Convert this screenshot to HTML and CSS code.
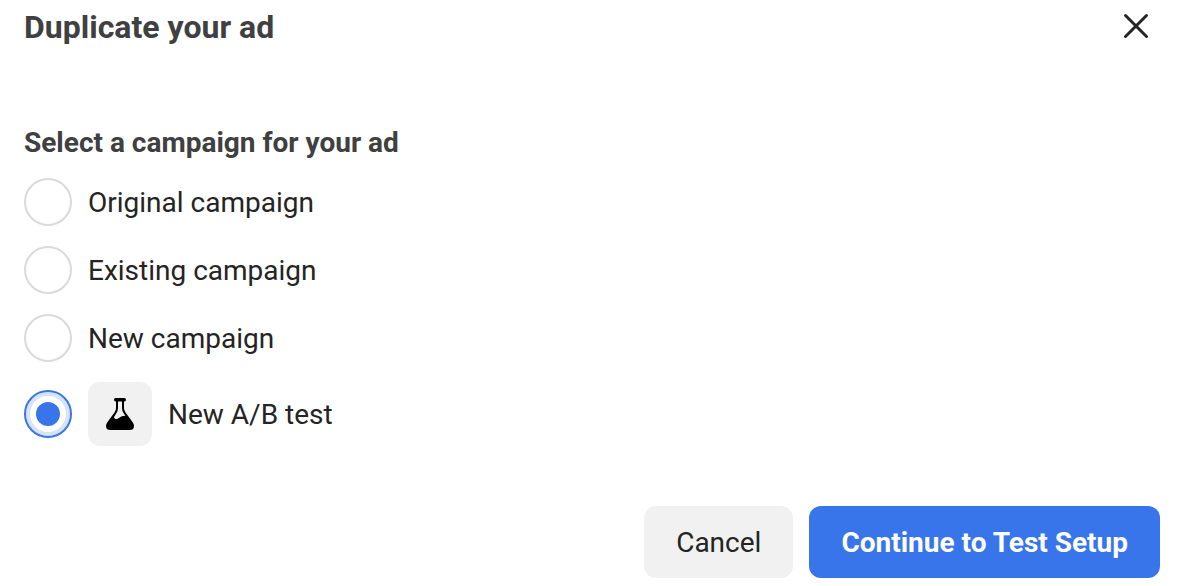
FILE: index.html
```html
<!DOCTYPE html>
<html lang="en">
<head>
    <meta charset="UTF-8">
    <meta name="viewport" content="width=device-width, initial-scale=1.0">
    <title>Duplicate your ad</title>
    <link rel="stylesheet" href="styles.css">
</head>
<body>
    <form class="dialog">
        <header class="dialog-header">
            <h1>Duplicate your ad</h1>
            <button type="button" class="close-button" aria-label="Close">
                <svg width="28" height="28" viewBox="0 0 28 28">
                    <path d="M3.500 3.500L24.500 24.500M24.500 3.500L3.500 24.500" fill="none" stroke="#242424" stroke-width="3" stroke-linecap="round"/>
                </svg>
            </button>
        </header>

        <fieldset class="campaigns">
            <legend>Select a campaign for your ad</legend>
            <label class="option">
                <input type="radio" name="campaign" value="original">
                <span>Original campaign</span>
            </label>
            <label class="option">
                <input type="radio" name="campaign" value="existing">
                <span>Existing campaign</span>
            </label>
            <label class="option">
                <input type="radio" name="campaign" value="new">
                <span>New campaign</span>
            </label>
            <label class="option">
                <input type="radio" name="campaign" value="test" checked>
                <span class="test-icon">
                    <svg width="32" height="36" viewBox="0 0 32 36" aria-hidden="true">
                        <path fill-rule="evenodd" d="M11.500 2H20.500Q22 2 22 3.700T20.500 5.500H20V12Q20 14.500 21.500 16.500L28.500 26Q30 28 30 30Q30 34 26 34H6Q2 34 2 30Q2 28 3.500 26L10.500 16.500Q12 14.500 12 12V5.500H11.500Q10 5.500 10 3.700T11.500 2ZM14 5.500V12Q14 15 12.200 17.500L10 21Q10 22.500 11.500 23C14.500 23.800 16 19.500 21.500 19.800L19.800 17.500Q18 15 18 12V5.500Z"/>
                    </svg>
                </span>
                <span>New A/B test</span>
            </label>
        </fieldset>

        <footer class="dialog-footer">
            <button type="button" class="button">Cancel</button>
            <button type="submit" class="button button-primary">Continue to Test Setup</button>
        </footer>
    </form>
</body>
</html>
```
FILE: styles.css
```css
* {
    box-sizing: border-box;
}
body {
    margin: 0;
    background-color: #fff;
    color: #242424;
    font-family: Roboto, Arial, sans-serif;
    font-size: 28px;
    line-height: 37px;
}
.dialog {
    padding: 8px 17px 8px 24px;
}
.dialog-header {
    display: flex;
    justify-content: space-between;
    align-items: flex-start;
    padding-right: 10px;
}
h1 {
    margin: 0;
    color: #404040;
    font-size: 32px;
    font-weight: bold;
    line-height: 38px;
}
.close-button {
    display: flex;
    padding: 4px 0;
    border: 0;
    background: none;
}
.campaigns {
    display: flex;
    flex-direction: column;
    gap: 20px;
    margin: 78px 0 0;
    padding: 0;
    border: 0;
}
legend {
    margin-bottom: 17px;
    padding: 0;
    color: #404040;
    font-weight: bold;
}
.option {
    display: flex;
    align-items: center;
    gap: 16px;
}
input[type="radio"] {
    appearance: none;
    width: 48px;
    height: 48px;
    margin: 0;
    padding: 10px;
    border: 2px solid #dadada;
    border-radius: 50%;
    background-clip: content-box;
}
input[type="radio"]:checked {
    border-color: #3875ea;
    background-color: #3875ea;
    box-shadow: inset 0 0 0 4px #d7e3fb;
}
.test-icon {
    display: flex;
    justify-content: center;
    align-items: center;
    width: 64px;
    height: 64px;
    border-radius: 12px;
    background-color: #f1f1f1;
}
.dialog-footer {
    display: flex;
    justify-content: flex-end;
    gap: 16px;
    margin-top: 60px;
}
.button {
    height: 72px;
    padding: 0 32px;
    border: 0;
    border-radius: 12px;
    background-color: #f1f1f1;
    color: #242424;
    font: inherit;
}
.button-primary {
    background-color: #3875ea;
    color: #fff;
    font-weight: bold;
}
```
